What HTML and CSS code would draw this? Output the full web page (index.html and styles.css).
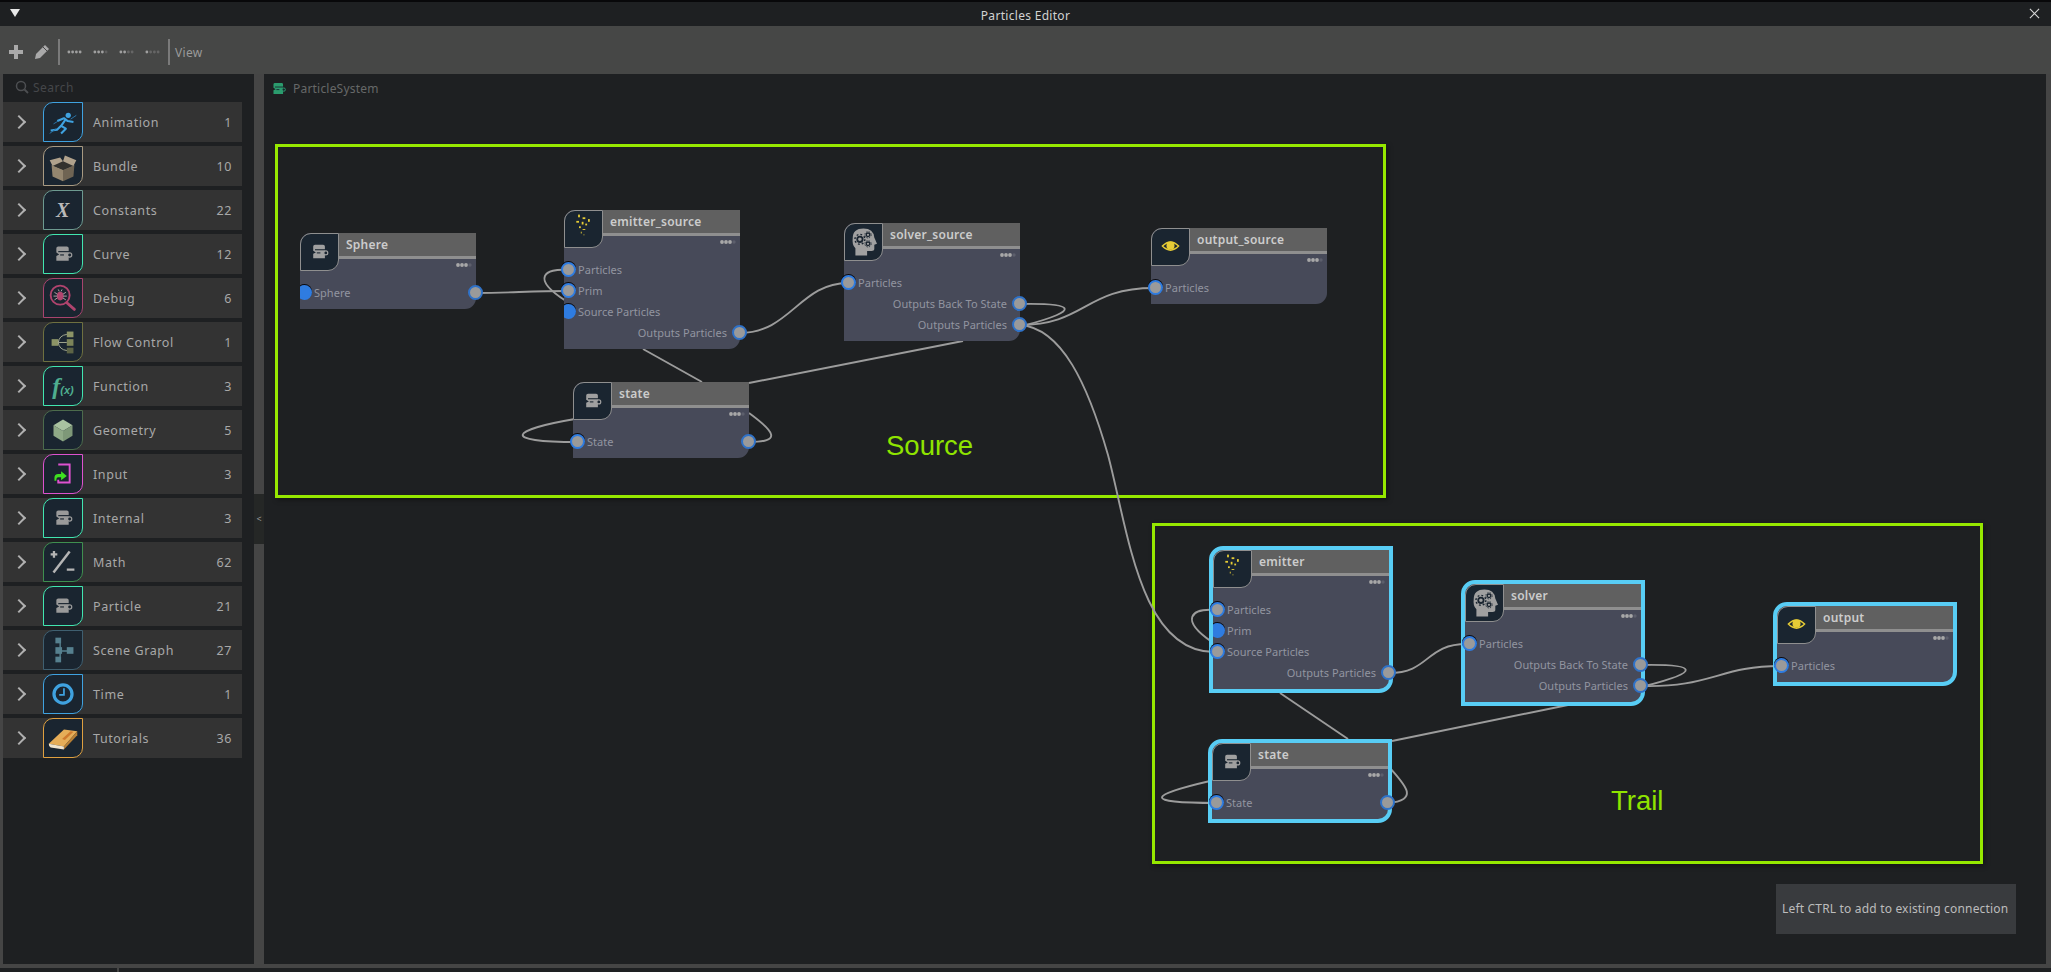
FILE: index.html
```html
<!DOCTYPE html>
<html lang="en">

<head>
  <meta charset="UTF-8">
  <meta name="viewport" content="width=device-width, initial-scale=1.0">
  <title>Particles Editor</title>
  <link rel="stylesheet" href="styles.css">
</head>

<body>
  <!-- shared icons, 40x40 box -->
  <svg class="defs" xmlns="http://www.w3.org/2000/svg">
    <symbol id="i-run" viewBox="0 0 40 40">
      <circle cx="25.500" cy="13" r="2.800" fill="#3fa2e0" />
      <path d="M14 19l7-3 4 3 6 1M23 17l-5 7 5 3-5 5M18 24l-4 4-7 1" fill="none" stroke="#3fa2e0" stroke-width="2.200" stroke-linejoin="round" />
      <path d="M6 32l7-5M10 22l5-3M28 17l6-4" fill="none" stroke="#2b77ac" stroke-width="1" />
    </symbol>
    <symbol id="i-box" viewBox="0 0 40 40">
      <path d="M8 19l12 5v12l-11-5z" fill="#94866f" />
      <path d="M20 24l12-5-1 12-11 5z" fill="#6f6453" />
      <path d="M8 19l11-4 12 4-11 5z" fill="#33322e" />
      <path d="M6 14l11-3 3 4-11 5zM20 15l2-6 12 5-3 6z" fill="#b0a28c" />
    </symbol>
    <symbol id="i-tag" viewBox="0 0 40 40">
      <path d="M13 14q0-2 2-2h9q2 0 2 2v13h-13v-5l3-1.500-3-2z" fill="currentColor" />
      <path d="M15 17.500h12" stroke="#1a2530" stroke-width="1.200" />
      <path d="M17 21h4" stroke="#1a2530" stroke-width="1.200" />
      <circle cx="27" cy="21" r="2.200" fill="#1a2530" stroke="currentColor" stroke-width="1.300" />
    </symbol>
    <symbol id="i-bug" viewBox="0 0 40 40">
      <circle cx="17" cy="17" r="10" fill="none" stroke="#b0446e" stroke-width="2" />
      <path d="M24 25l8 7" stroke="#b0446e" stroke-width="3" stroke-linecap="round" />
      <ellipse cx="17" cy="18" rx="3.500" ry="4.500" fill="#b0446e" />
      <path d="M11 14l3 2M23 14l-3 2M10 18h4M24 18h-4M11 22l3-2M23 22l-3-2M15 11l1 2M19 11l-1 2" stroke="#b5a5ad" stroke-width="1" />
    </symbol>
    <symbol id="i-flow" viewBox="0 0 40 40">
      <rect x="8" y="17" width="7" height="7" fill="#8c9466" />
      <rect x="24" y="9" width="7" height="6" fill="#8c9466" />
      <rect x="24" y="17" width="7" height="7" fill="#7c8459" />
      <rect x="24" y="26" width="7" height="6" fill="#5d6446" />
      <path d="M24 12q-8 1-9 8.500q1 7.500 9 8.500M15 20.500h9" fill="none" stroke="#a8ad93" stroke-width="1" />
    </symbol>
    <symbol id="i-cube" viewBox="0 0 40 40">
      <path d="M20 9l10 6-10 6-10-6z" fill="#a9c2a0" />
      <path d="M10 15l10 6v11l-10-6z" fill="#8fa987" />
      <path d="M30 15l-10 6v11l10-6z" fill="#7e9878" />
    </symbol>
    <symbol id="i-input" viewBox="0 0 40 40">
      <path d="M18 10h9v19h-12v-3M15 10h3" fill="none" stroke="#de52cf" stroke-width="2" />
      <path d="M11 27v-3q0-4 4-4h3v-3l6 5-6 4.500v-3h-3q-2 0-2 3.500z" fill="#3fe020" />
    </symbol>
    <symbol id="i-math" viewBox="0 0 40 40">
      <path d="M10 31l17-22" stroke="#b5b5b5" stroke-width="2.600" />
      <path d="M7 12h7M10.500 8.500v7M24 28h8" stroke="#b5b5b5" stroke-width="2.400" />
    </symbol>
    <symbol id="i-scene" viewBox="0 0 40 40">
      <path d="M17 12v18M17 21h10" stroke="#56808f" stroke-width="1.500" />
      <rect x="12" y="7" width="6" height="6" fill="#56808f" />
      <rect x="12" y="17" width="7" height="7" fill="#56808f" />
      <rect x="12" y="27" width="6" height="6" fill="#56808f" />
      <rect x="24" y="17" width="7" height="7" fill="#56808f" />
    </symbol>
    <symbol id="i-clock" viewBox="0 0 40 40">
      <circle cx="20" cy="20" r="9.500" fill="none" stroke="#3fa2e0" stroke-width="3.400" />
      <path d="M21 14v7h-5" fill="none" stroke="#3fa2e0" stroke-width="1.800" />
    </symbol>
    <symbol id="i-book" viewBox="0 0 40 40">
      <path d="M5 26l16-15 14 2-14 16z" fill="#e5ad58" />
      <path d="M5 26l16 3 0 3-14-2q-2-1-2-4z" fill="#efe4cf" />
      <path d="M21 29l14-16v4l-14 15z" fill="#b77f35" />
      <path d="M19 21l9-8 3 .5-9 8.500z" fill="#cf7a2e" />
    </symbol>
    <symbol id="i-sprinkle" viewBox="0 0 40 40">
      <g fill="#e6cc35">
        <rect x="14" y="4" width="2" height="3" />
        <rect x="19" y="7" width="3" height="2" />
        <rect x="25" y="9" width="2" height="3" />
        <rect x="12" y="11" width="3" height="2" />
        <rect x="18" y="12" width="2" height="3" />
        <rect x="22" y="14" width="2" height="2" />
        <rect x="15" y="17" width="2" height="2" />
        <rect x="19" y="20" width="3" height="1" />
        <rect x="17" y="23" width="1" height="2" />
        <rect x="20" y="26" width="1" height="1" />
      </g>
    </symbol>
    <symbol id="i-head" viewBox="0 0 40 40">
      <path d="M8 16q0-11 12-11 11 0 12 10l3 7-3 1v5q0 2-3 2h-5v5h-13v-8q-4-4-3-11z" fill="#a0a0a0" />
      <circle cx="16" cy="17" r="3" fill="none" stroke="#1a2530" stroke-width="2" />
      <circle cx="16" cy="17" r="5.500" fill="none" stroke="#1a2530" stroke-width="1.600" stroke-dasharray="2 2.300" />
      <circle cx="25" cy="12" r="2" fill="none" stroke="#1a2530" stroke-width="1.500" />
      <circle cx="25" cy="12" r="3.500" fill="none" stroke="#1a2530" stroke-width="1" stroke-dasharray="1.500 1.300" />
      <circle cx="25" cy="22" r="2" fill="none" stroke="#1a2530" stroke-width="1.500" />
      <circle cx="25" cy="22" r="3.500" fill="none" stroke="#1a2530" stroke-width="1" stroke-dasharray="1.500 1.300" />
    </symbol>
    <symbol id="i-eye" viewBox="0 0 40 40">
      <path d="M11 19q9-9 18 0q-9 9-18 0z" fill="none" stroke="#e6cc35" stroke-width="1.600" />
      <circle cx="20" cy="18.500" r="4.500" fill="#e6cc35" />
    </symbol>
    <symbol id="i-dots" viewBox="0 0 16 4">
      <circle cx="2" cy="2" r="1.900" fill="#a8a8a8" />
      <circle cx="6" cy="2" r="1.900" fill="#a8a8a8" />
      <circle cx="10" cy="2" r="1.900" fill="#a8a8a8" />
      <circle cx="14" cy="2" r="1.700" fill="#5c5f6c" />
    </symbol>
  </svg>

  <div class="strip"></div>

  <div class="titlebar">
    <span class="menu-arrow"></span>
    <span class="title-text">Particles Editor</span>
    <svg class="close-icon" viewBox="0 0 12 12"><path d="M1 1l10 10M11 1L1 11" stroke="#d8d8d8" stroke-width="1.200" /></svg>
  </div>

  <div class="toolbar">
    <svg class="tool-icon" viewBox="0 0 14 14"><path d="M5 0h4v5h5v4H9v5H5V9H0V5h5z" fill="#a9a9a9" /></svg>
    <svg class="tool-icon pencil" viewBox="0 0 14 14"><path d="M10 0l4 4-9 9-5 1 1-5z" fill="#a9a9a9" /><path d="M8 2l4 4" stroke="#454545" /></svg>
    <span class="tool-sep"></span>
    <svg class="tool-dots" viewBox="0 0 16 4"><g fill="#a0a0a0"><circle cx="2" cy="2" r="1.500" /><circle cx="6" cy="2" r="1.500" /><circle cx="10" cy="2" r="1.500" /><circle cx="14" cy="2" r="1.500" /></g></svg>
    <svg class="tool-dots" viewBox="0 0 16 4"><g fill="#a0a0a0"><circle cx="2" cy="2" r="1.500" /><circle cx="6" cy="2" r="1.500" /><circle cx="10" cy="2" r="1.500" /></g><circle cx="14" cy="2" r="1.500" fill="#5f5f5f" /></svg>
    <svg class="tool-dots" viewBox="0 0 16 4"><g fill="#a0a0a0"><circle cx="2" cy="2" r="1.500" /><circle cx="6" cy="2" r="1.500" /></g><g fill="#666"><circle cx="10" cy="2" r="1.500" /><circle cx="14" cy="2" r="1.500" /></g></svg>
    <svg class="tool-dots" viewBox="0 0 16 4"><circle cx="2" cy="2" r="1.500" fill="#a0a0a0" /><g fill="#666"><circle cx="6" cy="2" r="1.500" /><circle cx="10" cy="2" r="1.500" /><circle cx="14" cy="2" r="1.500" /></g></svg>
    <span class="tool-sep second"></span>
    <span class="tool-label">View</span>
  </div>

  <div class="main">
    <div class="sidebar">
      <div class="search">
        <svg class="search-icon" viewBox="0 0 14 14"><circle cx="6" cy="6" r="4.500" fill="none" stroke="#4d4f52" stroke-width="1.500" /><path d="M9.500 9.500L13 13" stroke="#4d4f52" stroke-width="1.800" /></svg>
        <span>Search</span>
      </div>
      <div class="cat-list">
        <div class="cat"><span class="chev"></span><span class="cat-icon c-blue"><svg><use href="#i-run" /></svg></span><span class="cat-name">Animation</span><span class="cat-count">1</span></div>
        <div class="cat"><span class="chev"></span><span class="cat-icon c-tan"><svg><use href="#i-box" /></svg></span><span class="cat-name">Bundle</span><span class="cat-count">10</span></div>
        <div class="cat"><span class="chev"></span><span class="cat-icon c-sage"><span class="glyph-x">X</span></span><span class="cat-name">Constants</span><span class="cat-count">22</span></div>
        <div class="cat"><span class="chev"></span><span class="cat-icon c-mint"><svg><use href="#i-tag" /></svg></span><span class="cat-name">Curve</span><span class="cat-count">12</span></div>
        <div class="cat"><span class="chev"></span><span class="cat-icon c-rose"><svg><use href="#i-bug" /></svg></span><span class="cat-name">Debug</span><span class="cat-count">6</span></div>
        <div class="cat"><span class="chev"></span><span class="cat-icon c-olive"><svg><use href="#i-flow" /></svg></span><span class="cat-name">Flow Control</span><span class="cat-count">1</span></div>
        <div class="cat"><span class="chev"></span><span class="cat-icon c-mint"><span class="glyph-fx">f<small>(x)</small></span></span><span class="cat-name">Function</span><span class="cat-count">3</span></div>
        <div class="cat"><span class="chev"></span><span class="cat-icon c-moss"><svg><use href="#i-cube" /></svg></span><span class="cat-name">Geometry</span><span class="cat-count">5</span></div>
        <div class="cat"><span class="chev"></span><span class="cat-icon c-pink"><svg><use href="#i-input" /></svg></span><span class="cat-name">Input</span><span class="cat-count">3</span></div>
        <div class="cat"><span class="chev"></span><span class="cat-icon c-mint"><svg><use href="#i-tag" /></svg></span><span class="cat-name">Internal</span><span class="cat-count">3</span></div>
        <div class="cat"><span class="chev"></span><span class="cat-icon c-green"><svg><use href="#i-math" /></svg></span><span class="cat-name">Math</span><span class="cat-count">62</span></div>
        <div class="cat"><span class="chev"></span><span class="cat-icon c-mint"><svg><use href="#i-tag" /></svg></span><span class="cat-name">Particle</span><span class="cat-count">21</span></div>
        <div class="cat"><span class="chev"></span><span class="cat-icon c-slate"><svg><use href="#i-scene" /></svg></span><span class="cat-name">Scene Graph</span><span class="cat-count">27</span></div>
        <div class="cat"><span class="chev"></span><span class="cat-icon c-blue"><svg><use href="#i-clock" /></svg></span><span class="cat-name">Time</span><span class="cat-count">1</span></div>
        <div class="cat"><span class="chev"></span><span class="cat-icon c-orange"><svg><use href="#i-book" /></svg></span><span class="cat-name">Tutorials</span><span class="cat-count">36</span></div>
      </div>
    </div>

    <div class="splitter"><div class="splitter-grip">&lt;</div></div>

    <div class="canvas">
      <div class="breadcrumb">
        <span class="crumb-icon"><svg viewBox="11 11 19 17"><use href="#i-tag" width="40" height="40" /></svg></span>
        <span>ParticleSystem</span>
      </div>

      <div class="frame frame-source"></div>
      <div class="frame frame-trail"></div>
      <div class="frame-label label-source">Source</div>
      <div class="frame-label label-trail">Trail</div>

      <!-- wires use page coordinates -->
      <svg class="wires" viewBox="264 74 1782 890">
        <g fill="none" stroke="#9c9c9c" stroke-width="1.900">
          <path d="M476 293C510 293 530 291 568 291" />
          <path d="M568 270C545 268 530 278 566 301" />
          <path d="M740 333C790 333 800 283 848 283" />
          <path d="M643 349L702 382" />
          <path d="M749 383L963 341" />
          <path d="M577 442C500 442 510 430 575 419" />
          <path d="M749 442C782 442 775 432 749 413" />
          <path d="M1020 304C1075 303 1082 310 1026 325" />
          <path d="M1020 325C1085 325 1085 288 1154 288" />
          <path d="M1020 325C1062 328 1088 385 1108 455C1128 530 1140 652 1214 652" />

          <path d="M1216 610C1190 608 1180 620 1212 642" />
          <path d="M1389 673C1430 673 1425 644 1467 644" />
          <path d="M1280 693L1348 739" />
          <path d="M1392 741L1568 705" />
          <path d="M1216 803C1140 803 1150 795 1210 781" />
          <path d="M1388 803C1420 800 1405 785 1390 768" />
          <path d="M1641 665C1700 664 1700 672 1645 686" />
          <path d="M1641 686C1710 688 1720 666 1780 666" />
        </g>
      </svg>

      <div class="node n-sphere">
        <div class="node-head">
          <span class="node-icon"><svg><use href="#i-tag" /></svg></span>
          <div class="node-title"><div class="node-name">Sphere</div><svg class="node-dots"><use href="#i-dots" /></svg></div>
        </div>
        <div class="node-ports">
          <div class="row in"><i class="port open"></i>Sphere<i class="port out"></i></div>
        </div>
      </div>

      <div class="node n-emitter-src">
        <div class="node-head">
          <span class="node-icon"><svg><use href="#i-sprinkle" /></svg></span>
          <div class="node-title"><div class="node-name">emitter_source</div><svg class="node-dots"><use href="#i-dots" /></svg></div>
        </div>
        <div class="node-ports">
          <div class="row in"><i class="port"></i>Particles</div>
          <div class="row in"><i class="port"></i>Prim</div>
          <div class="row in"><i class="port open"></i>Source Particles</div>
          <div class="row right">Outputs Particles<i class="port out"></i></div>
        </div>
      </div>

      <div class="node n-solver-src">
        <div class="node-head">
          <span class="node-icon"><svg><use href="#i-head" /></svg></span>
          <div class="node-title"><div class="node-name">solver_source</div><svg class="node-dots"><use href="#i-dots" /></svg></div>
        </div>
        <div class="node-ports">
          <div class="row in"><i class="port"></i>Particles</div>
          <div class="row right">Outputs Back To State<i class="port out"></i></div>
          <div class="row right">Outputs Particles<i class="port out"></i></div>
        </div>
      </div>

      <div class="node n-output-src">
        <div class="node-head">
          <span class="node-icon"><svg><use href="#i-eye" /></svg></span>
          <div class="node-title"><div class="node-name">output_source</div><svg class="node-dots"><use href="#i-dots" /></svg></div>
        </div>
        <div class="node-ports">
          <div class="row in"><i class="port"></i>Particles</div>
        </div>
      </div>

      <div class="node n-state-src">
        <div class="node-head">
          <span class="node-icon"><svg><use href="#i-tag" /></svg></span>
          <div class="node-title"><div class="node-name">state</div><svg class="node-dots"><use href="#i-dots" /></svg></div>
        </div>
        <div class="node-ports">
          <div class="row in"><i class="port"></i>State<i class="port out"></i></div>
        </div>
      </div>

      <div class="node selected n-emitter">
        <div class="node-head">
          <span class="node-icon"><svg><use href="#i-sprinkle" /></svg></span>
          <div class="node-title"><div class="node-name">emitter</div><svg class="node-dots"><use href="#i-dots" /></svg></div>
        </div>
        <div class="node-ports">
          <div class="row in"><i class="port"></i>Particles</div>
          <div class="row in"><i class="port open"></i>Prim</div>
          <div class="row in"><i class="port"></i>Source Particles</div>
          <div class="row right">Outputs Particles<i class="port out"></i></div>
        </div>
      </div>

      <div class="node selected n-solver">
        <div class="node-head">
          <span class="node-icon"><svg><use href="#i-head" /></svg></span>
          <div class="node-title"><div class="node-name">solver</div><svg class="node-dots"><use href="#i-dots" /></svg></div>
        </div>
        <div class="node-ports">
          <div class="row in"><i class="port"></i>Particles</div>
          <div class="row right">Outputs Back To State<i class="port out"></i></div>
          <div class="row right">Outputs Particles<i class="port out"></i></div>
        </div>
      </div>

      <div class="node selected n-output">
        <div class="node-head">
          <span class="node-icon"><svg><use href="#i-eye" /></svg></span>
          <div class="node-title"><div class="node-name">output</div><svg class="node-dots"><use href="#i-dots" /></svg></div>
        </div>
        <div class="node-ports">
          <div class="row in"><i class="port"></i>Particles</div>
        </div>
      </div>

      <div class="node selected n-state">
        <div class="node-head">
          <span class="node-icon"><svg><use href="#i-tag" /></svg></span>
          <div class="node-title"><div class="node-name">state</div><svg class="node-dots"><use href="#i-dots" /></svg></div>
        </div>
        <div class="node-ports">
          <div class="row in"><i class="port"></i>State<i class="port out"></i></div>
        </div>
      </div>

      <div class="hint">Left CTRL to add to existing connection</div>
    </div>
  </div>

  <div class="footer"><span class="footer-tab"></span></div>
</body>

</html>
```

FILE: styles.css
```css
* {
  box-sizing: border-box;
}

html,
body {
  margin: 0;
  height: 100%;
}

body {
  display: flex;
  flex-direction: column;
  height: 972px;
  overflow: hidden;
  background-color: #454545;
  font-family: "Noto Sans", sans-serif;
  color: #a8a8a8;
}

.defs {
  display: block;
  flex: none;
  width: 0;
  height: 0;
}

.strip {
  flex: none;
  height: 2px;
  background-color: #08080a;
}

.titlebar {
  display: flex;
  flex: none;
  align-items: center;
  justify-content: center;
  position: relative;
  height: 24px;
  padding-top: 2px;
  background-color: #1e2022;
}

.menu-arrow {
  position: absolute;
  left: 10px;
  top: 7px;
  border-left: 5px solid transparent;
  border-right: 5px solid transparent;
  border-top: 8px solid #e8e8e8;
}

.title-text {
  font-size: 12px;
  letter-spacing: 0.3px;
  color: #d2d2d2;
}

.close-icon {
  position: absolute;
  right: 11px;
  top: 6px;
  width: 11px;
  height: 11px;
}

.toolbar {
  display: flex;
  flex: none;
  align-items: center;
  height: 48px;
  padding-top: 4px;
  padding-left: 9px;
  background-color: #464746;
}

.tool-icon {
  width: 14px;
  height: 14px;
  margin-right: 12px;
}

.pencil {
  margin-right: 9px;
}

.tool-sep {
  width: 2px;
  height: 26px;
  margin-right: 7px;
  background-color: #7a7a7a;
}

.tool-sep.second {
  margin-left: -3px;
  margin-right: 5px;
}

.tool-dots {
  width: 15px;
  height: 4px;
  margin-right: 11px;
}

.tool-label {
  font-size: 12px;
  letter-spacing: 0.3px;
  color: #9a9a9a;
}

.main {
  display: flex;
  flex: none;
  height: 890px;
  padding: 0 5px 0 3px;
}

.sidebar {
  width: 251px;
  background-color: #1e2022;
}

.search {
  display: flex;
  align-items: center;
  gap: 4px;
  height: 28px;
  padding-bottom: 2px;
  padding-left: 12px;
  font-size: 12px;
  letter-spacing: 0.5px;
  color: #45474a;
}

.search-icon {
  width: 14px;
  height: 14px;
}

.cat-list {
  display: flex;
  flex-direction: column;
  gap: 4px;
  width: 239px;
}

.cat {
  display: flex;
  align-items: center;
  height: 40px;
  background-color: #333333;
  font-size: 12.500px;
  letter-spacing: 0.6px;
}

.chev {
  width: 10px;
  height: 10px;
  margin-left: 11px;
  margin-right: 19px;
  border-top: 2px solid #b0b0b0;
  border-right: 2px solid #b0b0b0;
  transform: rotate(45deg);
}

.cat-icon {
  display: flex;
  align-items: center;
  justify-content: center;
  width: 40px;
  height: 40px;
  margin-right: 10px;
  border: 1px solid;
  border-radius: 10px 0 10px 0;
  background-color: #1a2530;
  color: #9a9a9a;
}

.cat-icon svg {
  width: 38px;
  height: 38px;
}

.c-blue { border-color: #3fa2e0; }
.c-tan { border-color: #a89a82; }
.c-sage { border-color: #6d9a90; }
.c-mint { border-color: #41e6b0; }
.c-rose { border-color: #a8446e; }
.c-olive { border-color: #6e7040; }
.c-moss { border-color: #4c6b4c; }
.c-pink { border-color: #dd52cf; }
.c-green { border-color: #3f8f4f; }
.c-slate { border-color: #3f5f70; }
.c-orange { border-color: #dfa040; }

.glyph-x {
  font-family: "Liberation Serif", serif;
  font-size: 20px;
  font-style: italic;
  font-weight: bold;
  color: #b9b9b9;
}

.glyph-fx {
  font-family: "Liberation Serif", serif;
  font-size: 24px;
  font-style: italic;
  font-weight: bold;
  letter-spacing: 0;
  color: #4fae8f;
}

.glyph-fx small {
  font-family: "Liberation Sans", sans-serif;
  font-size: 11px;
}

.cat-name {
  flex: 1;
}

.cat-count {
  margin-right: 10px;
}

.splitter {
  width: 10px;
  padding-top: 420px;
}

.splitter-grip {
  height: 50px;
  background-color: #252726;
  font-size: 9px;
  line-height: 50px;
  text-align: center;
  color: #9a9a9a;
}

.canvas {
  position: relative;
  flex: 1;
  overflow: hidden;
  background-color: #1e2022;
}

.breadcrumb {
  display: flex;
  align-items: center;
  gap: 7px;
  height: 28px;
  padding-left: 8px;
  font-size: 12px;
  letter-spacing: 0.2px;
  color: #666868;
}

.crumb-icon {
  width: 14px;
  height: 13px;
  color: #2b9c6e;
}

.crumb-icon svg {
  display: block;
  width: 14px;
  height: 13px;
}

.frame {
  position: absolute;
  border: 3px solid #96e800;
  box-shadow: 2px 2px 5px rgba(0, 0, 0, 0.35);
}

.frame-source {
  left: 11px;
  top: 70px;
  width: 1111px;
  height: 354px;
}

.frame-trail {
  left: 888px;
  top: 449px;
  width: 831px;
  height: 341px;
}

.frame-label {
  position: absolute;
  font-family: "Liberation Sans", sans-serif;
  font-size: 27.500px;
  line-height: 32px;
  color: #8fe400;
}

.label-source {
  left: 622px;
  top: 356px;
}

.label-trail {
  left: 1347px;
  top: 711px;
}

.wires {
  position: absolute;
  left: 0;
  top: 0;
  width: 1782px;
  height: 890px;
}

.node {
  position: absolute;
  width: 176px;
  border-radius: 11px 0 11px 0;
  background-color: #474a59;
}

.node.selected {
  width: 184px;
  border: 4px solid #58cdf5;
  border-radius: 14px 0 14px 0;
}

.n-sphere { left: 36px; top: 159px; }
.n-emitter-src { left: 300px; top: 136px; }
.n-solver-src { left: 580px; top: 149px; }
.n-output-src { left: 887px; top: 154px; }
.n-state-src { left: 309px; top: 308px; }
.n-emitter { left: 945px; top: 472px; }
.n-solver { left: 1197px; top: 506px; }
.n-output { left: 1509px; top: 528px; }
.n-state { left: 944px; top: 665px; }

.node-head {
  display: flex;
  height: 38px;
}

.node-icon {
  flex: none;
  width: 39px;
  height: 38px;
  border: 1px solid #8f8f8f;
  border-radius: 11px 0 11px 0;
  background-color: #1a2530;
  color: #a0a0a0;
}

.node-icon svg {
  display: block;
  width: 37px;
  height: 36px;
}

.node-title {
  display: flex;
  flex: 1;
  flex-direction: column;
}

.node-name {
  height: 26px;
  padding-left: 7px;
  border-bottom: 3px solid #8f8f8f;
  background-color: #606060;
  font-size: 12px;
  font-weight: 600;
  line-height: 24px;
  letter-spacing: 0.25px;
  color: #cccccc;
}

.node-dots {
  align-self: flex-end;
  width: 16px;
  height: 4px;
  margin-top: 4px;
  margin-right: 4px;
}

.node-ports {
  padding: 11px 0 6px;
}

.row {
  position: relative;
  display: flex;
  align-items: center;
  height: 21px;
  font-size: 11px;
  letter-spacing: 0.03px;
  color: #9295a0;
}

.row.in {
  padding-left: 14px;
}

.row.right {
  justify-content: flex-end;
  padding-right: 13px;
}

/* gray dot with thin blue ring, half off the node edge */
.port {
  position: absolute;
  left: -3px;
  top: 3px;
  width: 15px;
  height: 15px;
  border: 2px solid #2f7ce0;
  border-radius: 50%;
  background-color: #9a9a9a;
  box-shadow: 0 -1px 0 #0a0a10;
}

.port.open {
  background-color: #2f7ce0;
  clip-path: inset(-2px -2px -2px 3px);
}

.port.out {
  left: auto;
  right: -7px;
  border-color: #2f72c8;
  box-shadow: none;
}

.hint {
  position: absolute;
  left: 1512px;
  top: 810px;
  width: 240px;
  height: 50px;
  padding-left: 6px;
  background-color: #393b3e;
  font-size: 12px;
  line-height: 50px;
  letter-spacing: 0.18px;
  white-space: nowrap;
  color: #bcbcbc;
}

.footer {
  flex: none;
  height: 4px;
  margin-top: 4px;
  background-color: #1e2022;
}

.footer-tab {
  display: block;
  width: 2px;
  height: 4px;
  margin-left: 117px;
  background-color: #454545;
}
```
